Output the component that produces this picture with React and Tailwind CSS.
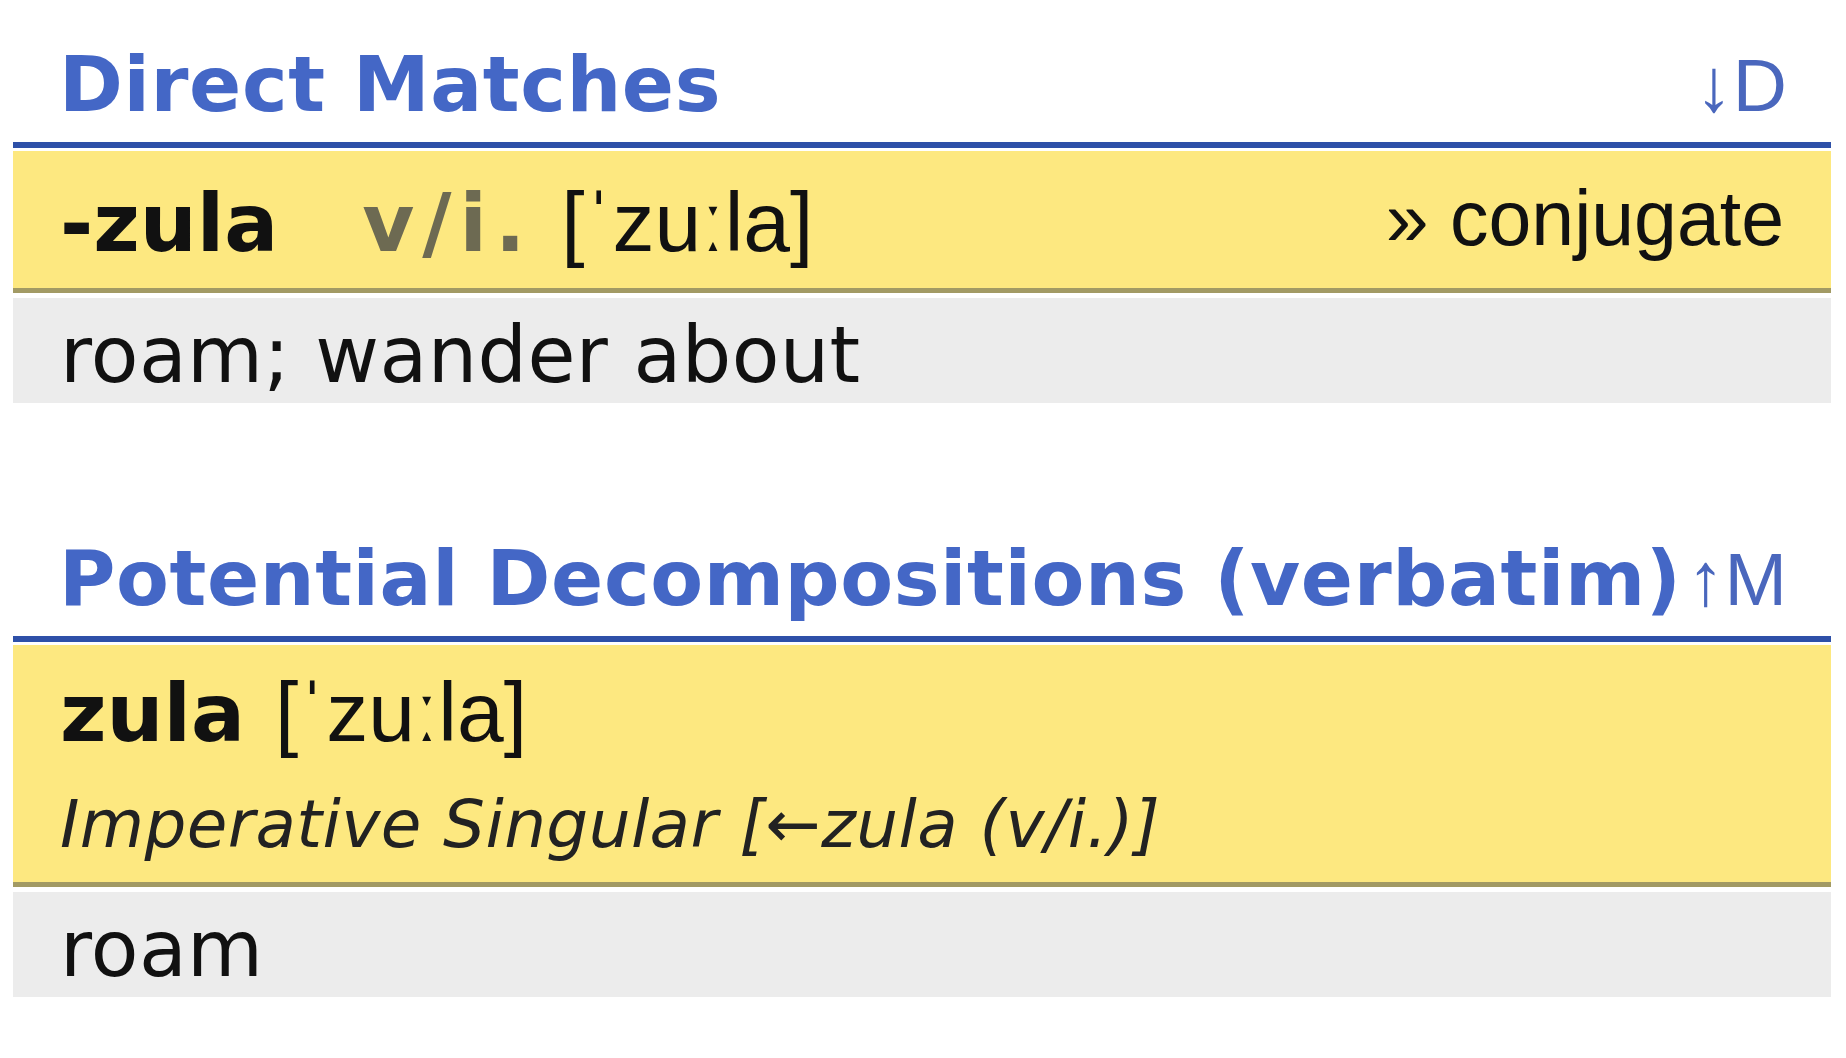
const rowText = "font-['DejaVu_Sans',sans-serif]";

function SectionHeading({ title, arrow, letter }) {
  return (
    <div className="flex items-baseline justify-between border-b-[6px] border-[#2e50a8] pl-[46px] pr-[44px] pt-[46px] pb-[18px] leading-[78px]">
      <h2 className="text-[77px] font-bold tracking-[0.6px] text-[#4467c6]">{title}</h2>
      <span className="font-['Liberation_Sans',sans-serif] text-[75px] text-[#4a67bd]">
        {arrow}
        {letter}
      </span>
    </div>
  );
}

function Pron({ children }) {
  return (
    <span className="font-['Liberation_Sans','DejaVu_Sans',sans-serif] text-[84px] text-[#111]">
      {children}
    </span>
  );
}

function Translation({ children }) {
  return (
    <div className="mt-[5px] bg-[#ececec] pl-[47px] pt-[18px] pb-[9px] text-[78px] leading-[78px] tracking-[0.4px] text-[#111]">
      {children}
    </div>
  );
}

export default function App() {
  return (
    <div className={`${rowText} min-h-screen bg-white text-[78px] leading-[78px] text-[#111]`}>
      <div className="ml-[13px] w-[1818px]">
        {/* Direct matches */}
        <section>
          <SectionHeading title="Direct Matches" arrow="↓" letter="D" />
          <div className="mt-[3px] flex items-baseline justify-between border-b-[5px] border-[#a29a64] bg-[#fde880] pl-[47px] pr-[47px] pt-[32px] pb-[25px]">
            <div className="flex items-baseline leading-[78px]">
              <span className="text-[80px] font-bold">-zula</span>
              <span className="ml-[84px] text-[80px] font-bold tracking-[8px] text-[#6d6a52]">v/i.</span>
              <span className="ml-[28px]">
                <Pron>[ˈzuːla]</Pron>
              </span>
            </div>
            <span className="self-start -mt-[4px] font-['Liberation_Sans',sans-serif] text-[77px] leading-[78px]">
              » conjugate
            </span>
          </div>
          <Translation>roam; wander about</Translation>
        </section>

        {/* Decompositions */}
        <section className="mt-[91px]">
          <SectionHeading title="Potential Decompositions (verbatim)" arrow="↑" letter="M" />
          <div className="mt-[3px] border-b-[5px] border-[#a29a64] bg-[#fde880] pl-[47px] pt-[28px] pb-[24px]">
            <div className="flex items-baseline leading-[78px]">
              <span className="text-[80px] font-bold">zula</span>
              <span className="ml-[30px]">
                <Pron>[ˈzuːla]</Pron>
              </span>
            </div>
            <div className="mt-[39px] text-[66px] italic leading-[66px] tracking-[0.4px] text-[#222]">
              Imperative Singular [←zula (v/i.)]
            </div>
          </div>
          <Translation>roam</Translation>
        </section>
      </div>
    </div>
  );
}
